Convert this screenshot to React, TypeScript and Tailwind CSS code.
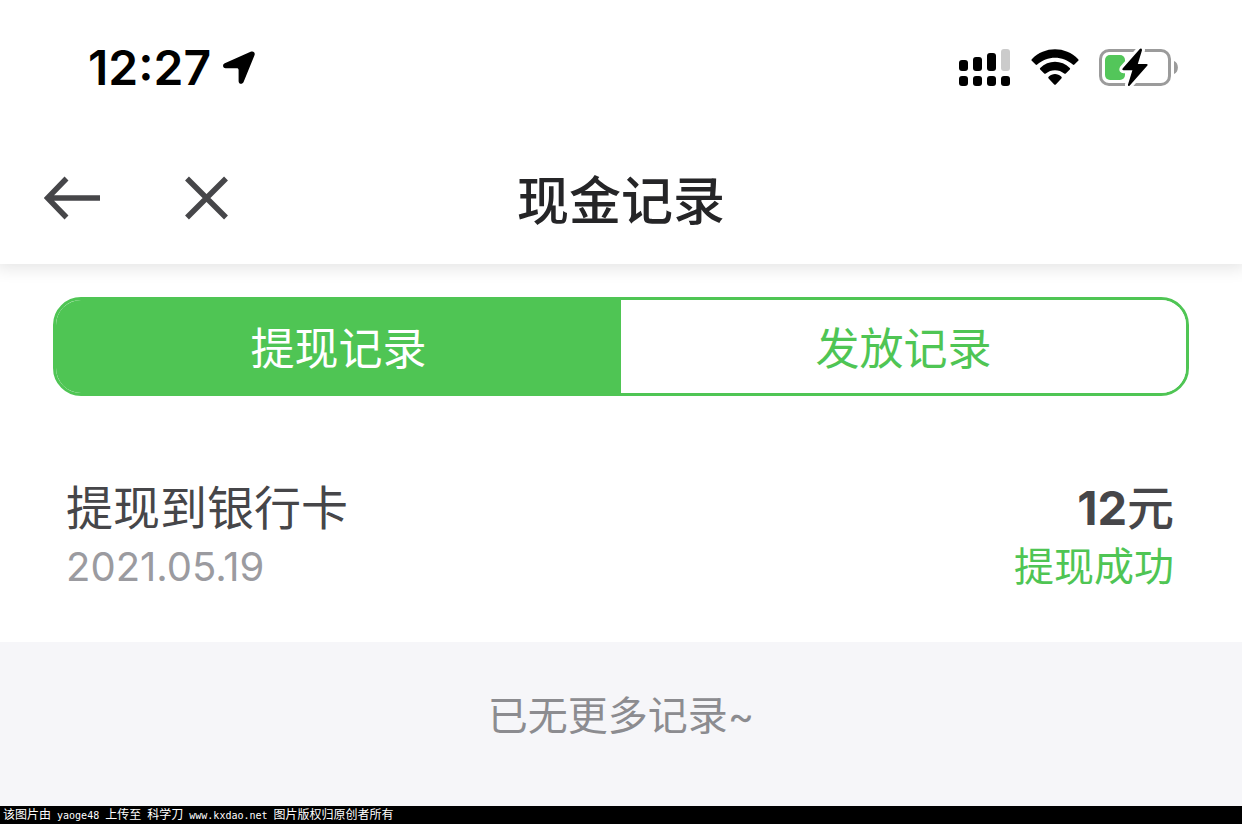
import React, { useState } from 'react';

type CashRecord = {
    id: number;
    title: string;
    date: string;
    amount: number;
    status: string;
};

type TabKey = 'withdraw' | 'grant';

const tabs: { key: TabKey; label: string }[] = [
    { key: 'withdraw', label: '提现记录' },
    { key: 'grant', label: '发放记录' },
];

const records: Record<TabKey, CashRecord[]> = {
    withdraw: [{ id: 1, title: '提现到银行卡', date: '2021.05.19', amount: 12, status: '提现成功' }],
    grant: [],
};

function LocationIcon() {
    return (
        <svg className="w-8 h-[34px]" viewBox="0 0 32 34" fill="currentColor" aria-hidden="true">
            <path d="M27.6 .8C30.4 -.4 32.6 1.6 31.4 4.4L20.6 31C19.4 33.8 15.6 33.2 15.6 30.2V19.2C15.6 17.8 15 17.2 13.6 17.2H2.6C-.3 17.2-.9 13.4 1.8 12.2Z" />
        </svg>
    );
}

function SignalIcon() {
    return (
        <svg className="w-[52px] h-10" viewBox="0 0 52 40" fill="currentColor" aria-hidden="true">
            <rect x="0" y="12" width="9" height="11" rx="3" />
            <rect x="14" y="9" width="9" height="14" rx="3" />
            <rect x="28" y="5" width="9" height="18" rx="3" />
            <rect x="42" y="1" width="9" height="22" rx="3" fill="#cbcbcb" />
            <rect x="0" y="28" width="9" height="10" rx="3" />
            <rect x="14" y="28" width="9" height="10" rx="3" />
            <rect x="28" y="28" width="9" height="10" rx="3" />
            <rect x="42" y="28" width="9" height="10" rx="3" />
        </svg>
    );
}

function WifiIcon() {
    return (
        <svg className="w-12 h-10" viewBox="0 0 48 40" fill="currentColor" aria-hidden="true">
            <path d="M.8 11.2C13.6-2 34.4-2 47.2 11.2Q48 12 47.2 12.8L43.4 16.6Q42.6 17.3 41.8 16.6C32 7.4 16 7.4 6.2 16.6Q5.4 17.3 4.6 16.6L.8 12.8Q0 12 .8 11.2Z" />
            <path d="M9.2 20C17.4 11.8 30.6 11.8 38.8 20Q39.6 20.8 38.8 21.6L34.8 25.5Q34 26.2 33.2 25.5C28.2 21 19.8 21 14.8 25.5Q14 26.2 13.2 25.5L9.2 21.6Q8.4 20.8 9.2 20Z" />
            <path d="M17.6 28.8C21.4 25.2 26.6 25.2 30.4 28.8Q31.2 29.6 30.4 30.4L24.8 36.4Q24 37.1 23.2 36.4L17.6 30.4Q16.8 29.6 17.6 28.8Z" />
        </svg>
    );
}

function BatteryIcon() {
    return (
        <svg className="w-20 h-10" viewBox="0 0 80 40" aria-hidden="true">
            <rect x="1.5" y="2.5" width="69" height="34" rx="8.5" fill="none" stroke="#9b9b9b" strokeWidth="3" />
            <path d="M75 13C80.2 15 80.2 24 75 26Z" fill="#9b9b9b" />
            <rect x="6" y="7" width="20" height="25" rx="5" fill="#53c65a" />
            <path
                d="M41 .8L23.6 20.6Q22.8 22.2 24.6 22.2H33.4L29 36.6Q28.8 39 30.8 37.6L48.4 17.6Q49.2 16 47.4 16H38.8L43 2.2Q43-.4 41 .8Z"
                fill="#000"
                stroke="#fff"
                strokeWidth="6"
                strokeLinejoin="round"
                paintOrder="stroke"
            />
        </svg>
    );
}

export default function App() {
    const [active, setActive] = useState<TabKey>('withdraw');

    return (
        <div className="min-h-screen flex flex-col bg-[#f6f6f9] font-['Inter','Noto_Sans_CJK_SC',sans-serif]">
            {/* Header */}
            <header className="relative bg-white shadow-[0_0_16px_4px_rgba(0,0,0,0.11)]">
                <div className="flex items-center justify-between h-[136px] pl-[88px] pr-[63px] text-black">
                    <div className="flex items-center gap-3">
                        <span className="text-[48px] leading-[48px] font-semibold">12:27</span>
                        <LocationIcon />
                    </div>
                    <div className="flex items-center gap-5">
                        <SignalIcon />
                        <WifiIcon />
                        <BatteryIcon />
                    </div>
                </div>
                <div className="grid grid-cols-[1fr_auto_1fr] items-center h-32 px-11 pb-1">
                    <div className="flex items-center gap-[84px] text-[#464649]">
                        <button type="button" aria-label="返回">
                            <svg className="w-14 h-11" viewBox="0 0 56 44" fill="none" stroke="currentColor" strokeWidth="5.5">
                                <path d="M22.5 2.5L3.5 22L22.5 41.5M3.5 22H56" />
                            </svg>
                        </button>
                        <button type="button" aria-label="关闭">
                            <svg className="w-11 h-11" viewBox="0 0 44 44" fill="none" stroke="currentColor" strokeWidth="5.5">
                                <path d="M3 2.5L42 41.5M42 2.5L3 41.5" />
                            </svg>
                        </button>
                    </div>
                    <h1 className="pt-2 text-[52px] leading-[64px] font-medium text-[#252527]">现金记录</h1>
                </div>
            </header>

            {/* Records */}
            <main className="bg-white pt-[33px]">
                <div className="flex mx-[53px] h-[99px] rounded-[28px] border-3 border-[#4fc554] overflow-hidden">
                    {tabs.map(tab => (
                        <button
                            key={tab.key}
                            type="button"
                            aria-pressed={active === tab.key}
                            onClick={() => setActive(tab.key)}
                            className={`flex-1 pt-1 text-[44px] leading-[64px] ${
                                active === tab.key ? 'bg-[#4fc554] text-white' : 'bg-white text-[#4fc554]'
                            }`}
                        >
                            {tab.label}
                        </button>
                    ))}
                </div>

                <ul className="pl-[66px] pr-[68px] pt-[82px] pb-[46px]">
                    {records[active].map(record => (
                        <li key={record.id} className="flex justify-between">
                            <div>
                                <div className="text-[47px] leading-[60px] text-[#464649]">{record.title}</div>
                                <time className="block text-[40px] leading-[58px] text-[#9b9ba0]">{record.date}</time>
                            </div>
                            <div className="text-right">
                                <div className="text-[47px] leading-[60px] text-[#464649]">
                                    <span className="font-bold">{record.amount}</span>
                                    <span className="font-medium">元</span>
                                </div>
                                <div className="text-[40px] leading-[58px] text-[#4fc554]">{record.status}</div>
                            </div>
                        </li>
                    ))}
                </ul>
            </main>

            <p className="flex-1 pt-[45px] text-center text-[40px] leading-[58px] text-[#8c8c90]">已无更多记录~</p>

            <footer className="h-[18px] px-[3px] bg-black text-white text-[12px] leading-[18px] whitespace-pre">
                该图片由<span className="font-['DejaVu_Sans_Mono',monospace] text-[10px]"> yaoge48 </span>
                上传至<span className="font-['DejaVu_Sans_Mono',monospace] text-[10px]"> </span>
                科学刀<span className="font-['DejaVu_Sans_Mono',monospace] text-[10px]"> www.kxdao.net </span>
                图片版权归原创者所有
            </footer>
        </div>
    );
}
